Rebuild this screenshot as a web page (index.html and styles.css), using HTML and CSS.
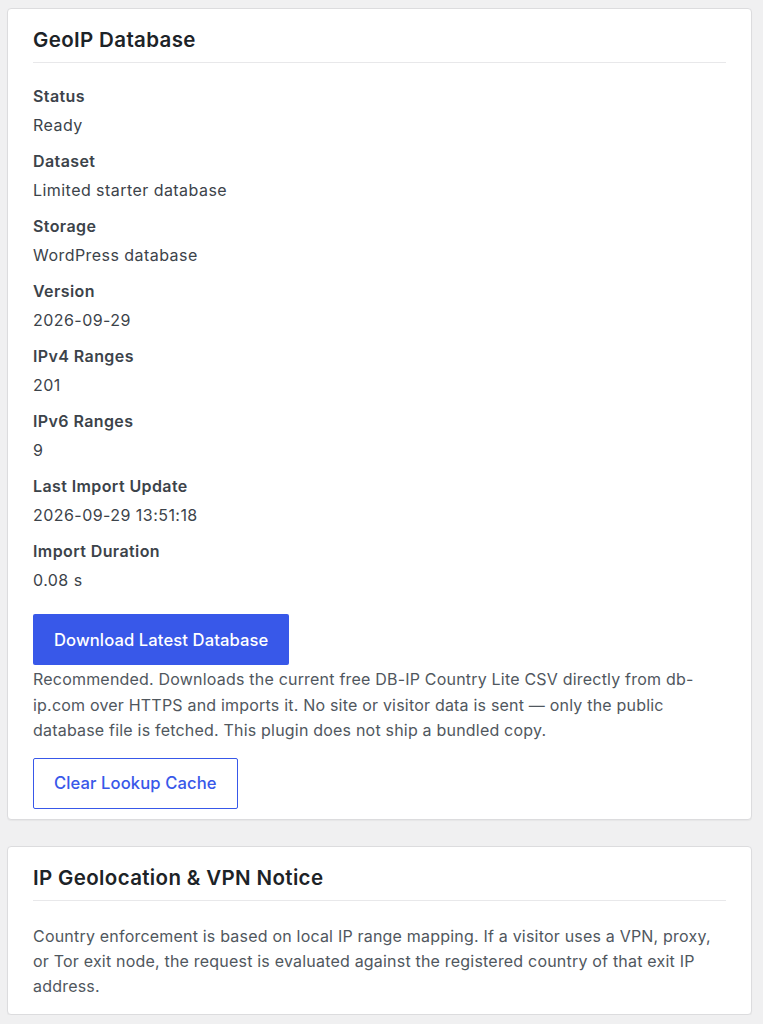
FILE: index.html
```html
<!DOCTYPE html>
<html lang="en">
<head>
    <meta charset="UTF-8">
    <meta name="viewport" content="width=device-width, initial-scale=1.0">
    <title>GeoIP Settings</title>
    <link rel="stylesheet" href="styles.css">
</head>
<body>

    <div class="settings-wrap">
        <!-- GeoIP database card -->
        <div class="card">
            <h2 class="card-title">GeoIP Database</h2>

            <dl class="info-list">
                <dt>Status</dt>
                <dd>Ready</dd>
                <dt>Dataset</dt>
                <dd>Limited starter database</dd>
                <dt>Storage</dt>
                <dd>WordPress database</dd>
                <dt>Version</dt>
                <dd>2026-09-29</dd>
                <dt>IPv4 Ranges</dt>
                <dd>201</dd>
                <dt>IPv6 Ranges</dt>
                <dd>9</dd>
                <dt>Last Import Update</dt>
                <dd>2026-09-29 13:51:18</dd>
                <dt>Import Duration</dt>
                <dd>0.08 s</dd>
            </dl>

            <button class="btn btn-primary">Download Latest Database</button>
            <p class="help-text">Recommended. Downloads the current free DB-IP Country Lite CSV directly from db-ip.com over HTTPS and imports it. No site or visitor data is sent — only the public database file is fetched. This plugin does not ship a bundled copy.</p>

            <button class="btn btn-outline">Clear Lookup Cache</button>
        </div>

        <!-- VPN notice card -->
        <div class="card card-notice">
            <h2 class="card-title">IP Geolocation &amp; VPN Notice</h2>
            <p class="notice-text">Country enforcement is based on local IP range mapping. If a visitor uses a VPN, proxy, or Tor exit node, the request is evaluated against the registered country of that exit IP address.</p>
        </div>
    </div>

</body>
</html>
```

FILE: styles.css
```css
body {
    margin: 0;
    padding: 0;
    background: #f0f0f1;
    font-family: 'Inter', 'Noto Sans', sans-serif;
    font-size: 16px;
    letter-spacing: 0.2px;
    color: #3c434a;
}

.settings-wrap {
    width: 745px;
    margin: 8px 0 0 7px;
    display: flex;
    flex-direction: column;
    gap: 26px;
}

.card {
    background: #fff;
    border: 1px solid #dcdcde;
    border-radius: 4px;
    box-shadow: 0 1px 1px rgba(0, 0, 0, 0.04);
    padding: 17px 25px 10px;
}

.card-title {
    margin: 0;
    padding-bottom: 8px;
    border-bottom: 1px solid #e8e8ea;
    font-size: 20.5px;
    line-height: 28px;
    font-weight: 600;
    letter-spacing: 0.35px;
    color: #1d2327;
}

.info-list {
    margin: 21px 0 22px;
}

.info-list dt {
    font-weight: 600;
    line-height: 24px;
    letter-spacing: 0.4px;
    color: #3c434a;
}

.info-list dd {
    margin: 5px 0 12px;
    line-height: 24px;
    letter-spacing: 0.45px;
}

.info-list dd:last-child {
    margin-bottom: 0;
}

.btn {
    display: block;
    font-family: inherit;
    font-size: 16.6px;
    font-weight: 500;
    letter-spacing: 0.1px;
    border-radius: 2px;
    cursor: pointer;
    padding: 0 21px;
}

.btn-primary {
    height: 51px;
    background: #3858e9;
    color: #fff;
    border: none;
}

.btn-outline {
    height: 51px;
    padding: 0 20px;
    background: #fff;
    color: #3858e9;
    border: 1px solid #3858e9;
}

.help-text {
    margin: 2px 0 14px;
    line-height: 25.5px;
    color: #50575e;
}

.card-notice {
    padding-bottom: 15px;
}

.notice-text {
    margin: 23px 0 0;
    line-height: 25px;
    color: #50575e;
}
```
